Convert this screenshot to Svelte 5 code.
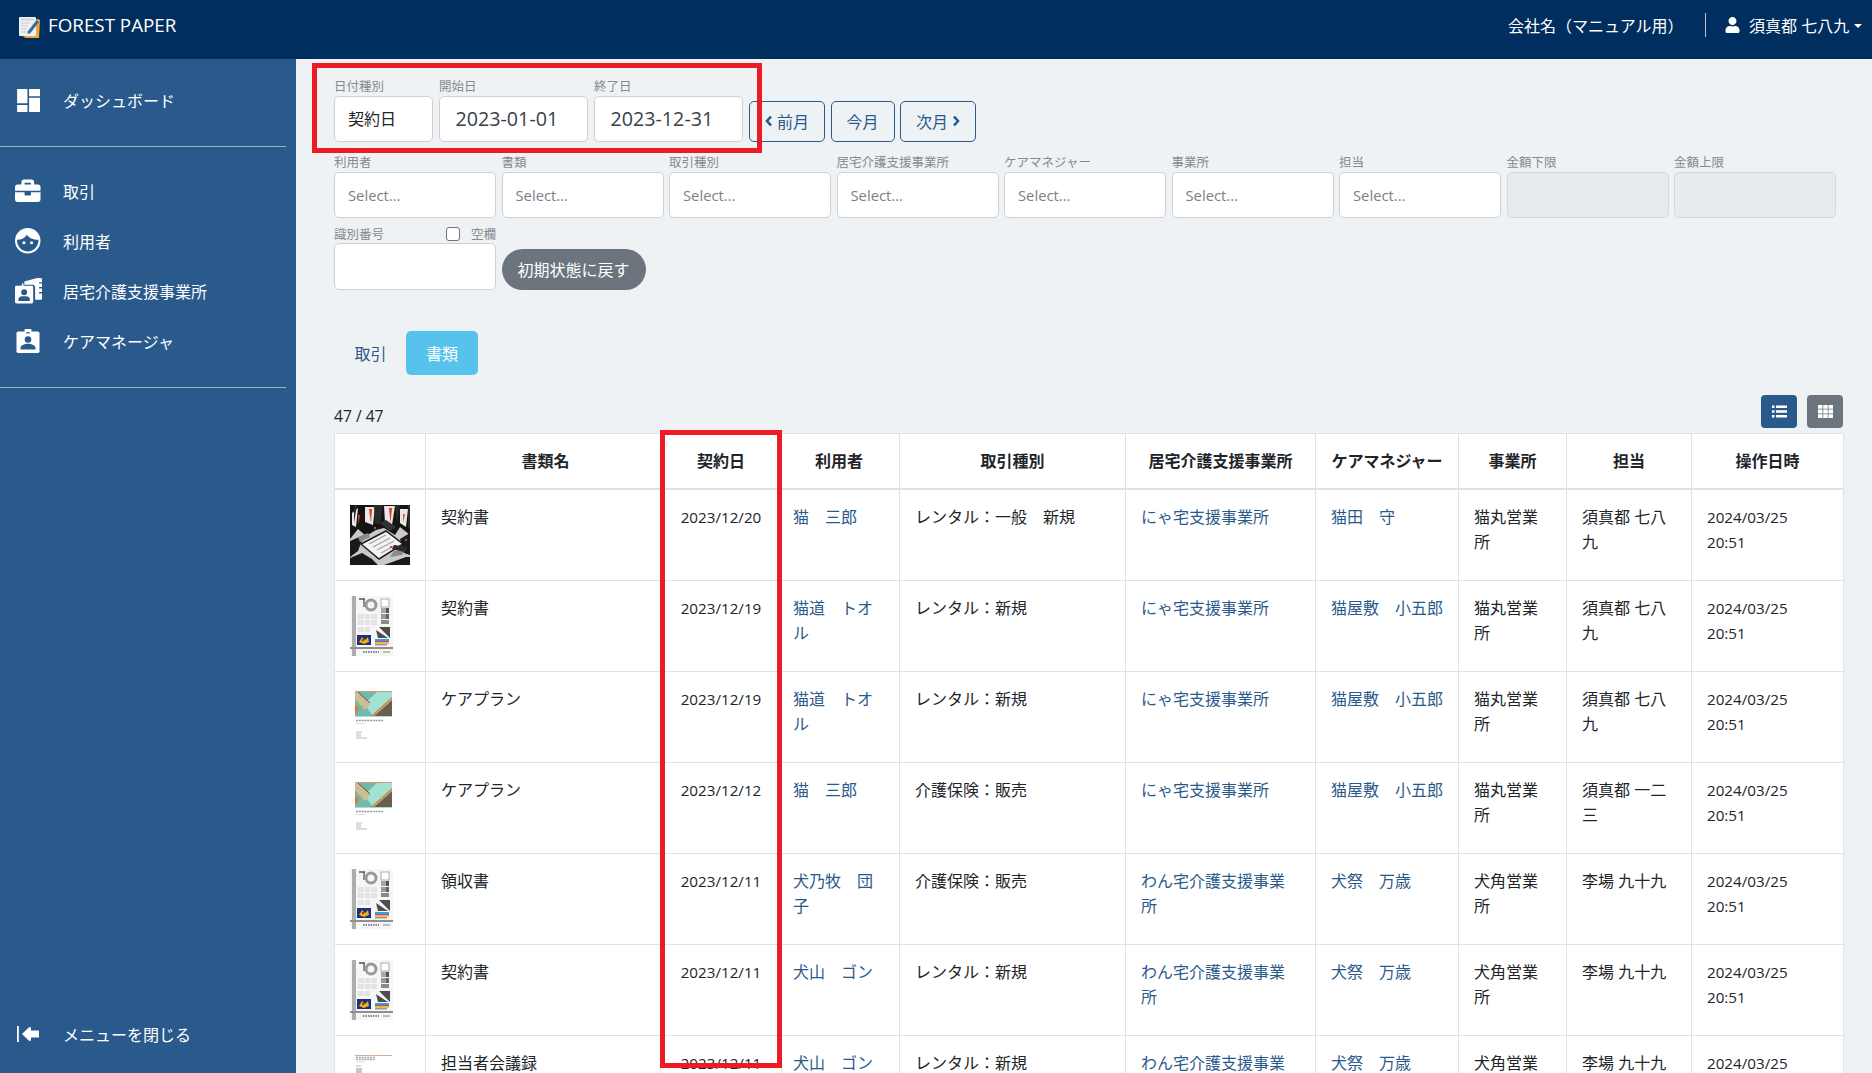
<script>
  const labelsA = ['利用者','書類','取引種別','居宅介護支援事業所','ケアマネジャー','事業所','担当'];
  const nya = 'にゃ宅支援事業所';
  const wan = 'わん宅介護支援事業所';
  const neko = '猫丸営業所';
  const inu = '犬角営業所';
  const rows = [
    { t:'dark', n:'契約書', d:'2023/12/20', u:'猫　三郎', k:'レンタル：一般　新規', o:nya, c:'猫田　守', b:neko, p:'須真都 七八九' },
    { t:'doc', n:'契約書', d:'2023/12/19', u:'猫道　トオル', k:'レンタル：新規', o:nya, c:'猫屋敷　小五郎', b:neko, p:'須真都 七八九' },
    { t:'plan', n:'ケアプラン', d:'2023/12/19', u:'猫道　トオル', k:'レンタル：新規', o:nya, c:'猫屋敷　小五郎', b:neko, p:'須真都 七八九' },
    { t:'plan', n:'ケアプラン', d:'2023/12/12', u:'猫　三郎', k:'介護保険：販売', o:nya, c:'猫屋敷　小五郎', b:neko, p:'須真都 一二三' },
    { t:'doc', n:'領収書', d:'2023/12/11', u:'犬乃牧　団子', k:'介護保険：販売', o:wan, c:'犬祭　万歳', b:inu, p:'李場 九十九' },
    { t:'doc', n:'契約書', d:'2023/12/11', u:'犬山　ゴン', k:'レンタル：新規', o:wan, c:'犬祭　万歳', b:inu, p:'李場 九十九' },
    { t:'minutes', n:'担当者会議録', d:'2023/12/11', u:'犬山　ゴン', k:'レンタル：新規', o:wan, c:'犬祭　万歳', b:inu, p:'李場 九十九' }
  ];
  const heads = ['', '書類名','契約日','利用者','取引種別','居宅介護支援事業所','ケアマネジャー','事業所','担当','操作日時'];
</script>

<div class="page">
  <header class="top">
    <div class="brand">
      <svg class="logo" viewBox="0 0 22 22">
        <path d="M6 20.5 L4 20 L4 6 L20 3 L22 4 L21 22 L7 22Z" fill="#f0a63a"/>
        <rect x="1" y="1" width="17" height="19" rx="1" fill="#eef1f2"/>
        <rect x="3" y="2.5" width="13" height="2" fill="#c9d3d9"/>
        <path d="M3 7h9M3 10h7M3 13h6M3 16h9" stroke="#c3ccd2" stroke-width="1.2"/>
        <path d="M10 15 L18.5 4 L21 6 L12.5 17 L9.6 18Z" fill="#3b6f94"/>
      </svg>
      <span>FOREST PAPER</span>
    </div>
    <div class="account">
      <span class="company">会社名（マニュアル用）</span>
      <span class="sep"></span>
      <svg class="user" viewBox="0 0 448 512"><path fill="#fff" d="M224 256c70.7 0 128-57.3 128-128S294.7 0 224 0 96 57.3 96 128s57.3 128 128 128zm89.6 32h-16.7c-22.2 10.2-46.9 16-72.9 16s-50.6-5.8-72.9-16h-16.7C60.2 288 0 348.2 0 422.4V464c0 26.5 21.5 48 48 48h352c26.5 0 48-21.5 48-48v-41.6c0-74.2-60.2-134.4-134.4-134.4z"/></svg>
      <span class="uname">須真都 七八九</span>
      <span class="caret"></span>
    </div>
  </header>

  <div class="body">
    <aside class="side">
      <nav class="group first">
        <a class="item">
          <svg class="ic" viewBox="0 0 22 22"><path fill="#fff" d="M1 1h9.500v13H1zM1 15.500h9.500V22H1zM12 1h10v6.500H12zM12 9h10v13H12z"/></svg>
          <span>ダッシュボード</span>
        </a>
      </nav>
      <nav class="group second">
        <a class="item">
          <svg class="ic brief" viewBox="0 0 512 512"><path fill="#fff" d="M320 336c0 8.84-7.16 16-16 16h-96c-8.84 0-16-7.16-16-16v-48H0v144c0 25.6 22.4 48 48 48h416c25.6 0 48-22.4 48-48V288H320v48zm144-208h-80V80c0-25.6-22.4-48-48-48H176c-25.6 0-48 22.4-48 48v48H48c-25.6 0-48 22.4-48 48v80h512v-80c0-25.6-22.4-48-48-48zm-144 0H192V96h128v32z"/></svg>
          <span>取引</span>
        </a>
        <a class="item">
          <svg class="ic brief" viewBox="0 0 25 25">
            <circle cx="12.500" cy="12.500" r="12.500" fill="#fff"/>
            <path fill="#2a5a8c" d="M2 11.500C6.500 11.500 9.800 9.600 11.500 6.500c2.200 3 6.300 5 11.500 5C23.300 17.800 18.500 23 12.500 23S1.700 17.800 2 11.500z"/>
            <circle cx="8.800" cy="14.500" r="1.500" fill="#fff"/><circle cx="16.200" cy="14.500" r="1.500" fill="#fff"/>
          </svg>
          <span>利用者</span>
        </a>
        <a class="item">
          <svg class="ic wide" viewBox="0 0 28 26">
            <path fill="#fff" d="M9.500 3.500 21.500 .3 C25 0 27 0 27.600 .8V20.500c0 1-.8 1.800-1.800 1.800H20.500V9.500c0-1.500-1.200-2.700-2.700-2.700H9.500z"/>
            <path d="M24.500 5h3M24.500 10h3M24.500 15h3" stroke="#2a5a8c" stroke-width="1.400"/>
            <rect x="0" y="8" width="18.500" height="18" rx="1.500" fill="#fff"/>
            <rect x="7" y="5.500" width="1.600" height="4" fill="#fff"/>
            <circle cx="9.300" cy="14.500" r="3" fill="#2a5a8c"/>
            <path fill="#2a5a8c" d="M3.500 23.500v-1.800c0-2 1.800-3.200 4-3.200h3.600c2.200 0 4 1.200 4 3.200v1.800z"/>
          </svg>
          <span>居宅介護支援事業所</span>
        </a>
        <a class="item">
          <svg class="ic" viewBox="0 0 23 24">
            <rect x="0" y="2.500" width="23" height="21.500" rx="1.800" fill="#fff"/>
            <rect x="8" y="0" width="7" height="5.500" rx="1" fill="#fff"/>
            <rect x="9.800" y="3.200" width="3.400" height="1.300" fill="#2a5a8c"/>
            <circle cx="11.500" cy="10.500" r="3.300" fill="#2a5a8c"/>
            <path fill="#2a5a8c" d="M4 20.500v-1.300c0-3 3.700-4.500 7.500-4.500s7.500 1.500 7.500 4.500v1.300z"/>
          </svg>
          <span>ケアマネージャ</span>
        </a>
      </nav>
      <a class="item close">
        <svg class="ic" viewBox="0 0 22 16"><rect x="0" y="0" width="1.800" height="16" fill="#fff"/><path fill="#fff" d="M5 8 12 1.200h2V4.500h8v7h-8v3.300h-2z"/></svg>
        <span>メニューを閉じる</span>
      </a>
    </aside>

    <main class="main">
      <section class="row-dates">
        <div class="field f-type"><label>日付種別</label><div class="box val">契約日</div></div>
        <div class="field f-date"><label>開始日</label><div class="box date">2023-01-01</div></div>
        <div class="field f-date"><label>終了日</label><div class="box date">2023-12-31</div></div>
        <button class="month b1">
          <svg viewBox="0 0 8 12"><path d="M6 1.500 2 6l4 4.500" fill="none" stroke="#2a5a8c" stroke-width="2.600"/></svg>前月
        </button>
        <button class="month b2">今月</button>
        <button class="month b3">次月
          <svg viewBox="0 0 8 12"><path d="M2 1.500 6 6l-4 4.500" fill="none" stroke="#2a5a8c" stroke-width="2.600"/></svg>
        </button>
      </section>

      <section class="grid9">
        {#each labelsA as l}
          <div class="field"><label>{l}</label><div class="box ph">Select...</div></div>
        {/each}
        <div class="field"><label>金額下限</label><div class="box off"></div></div>
        <div class="field"><label>金額上限</label><div class="box off"></div></div>
        <div class="field id">
          <div class="idlabel"><label>識別番号</label><span class="chk"><i></i><label>空欄</label></span></div>
          <div class="box"></div>
        </div>
        <div class="resetwrap"><button class="reset">初期状態に戻す</button></div>
      </section>

      <div class="tabs">
        <span class="tab">取引</span>
        <span class="tab on">書類</span>
      </div>

      <div class="tools">
        <span class="count">47 / 47</span>
        <div class="views">
          <span class="vbtn act">
            <svg viewBox="0 0 15 13"><path fill="#fff" d="M0 .5h2.500V3H0zM4 .5h11V3H4zM0 5.200h2.500v2.500H0zM4 5.200h11v2.500H4zM0 10h2.500v2.500H0zM4 10h11v2.500H4z"/></svg>
          </span>
          <span class="vbtn">
            <svg viewBox="0 0 15 13"><path fill="#fff" d="M0 0h4.500v3.800H0zM5.250 0h4.500v3.800h-4.500zM10.500 0H15v3.800h-4.500zM0 4.600h4.500v3.800H0zM5.250 4.600h4.500v3.800h-4.500zM10.500 4.600H15v3.800h-4.500zM0 9.200h4.500V13H0zM5.250 9.200h4.500V13h-4.500zM10.500 9.200H15V13h-4.500z"/></svg>
          </span>
        </div>
      </div>

      <table class="tbl">
        <thead>
          <tr>{#each heads as h}<th>{h}</th>{/each}</tr>
        </thead>
        <tbody>
          {#each rows as r}
            <tr>
              <td class="thumb">
                {#if r.t === 'dark'}
                  <svg class="tdark" viewBox="0 0 60 60">
                    <rect width="60" height="60" fill="#c9c9c9"/>
                    <path fill="#141414" d="M0 0h60v30L50 22 45 30 34 23 26 25 16 31 8 24 0 34z"/>
                    <path fill="#e8e8e8" d="M2 8 8 3 6 22 2 20zM15 2h10L23 20 15 17zM34 1h11L42 20 35 17zM50 4 58 4 56 22 50 18z"/>
                    <path fill="#2a2a2a" d="M4 0h3L4 18zM24 0h9L30 20 25 18zM45 0h5L47 18zM58 0h2V24l-2-2z"/>
                    <path fill="#e23a1a" d="M19 4h3l-1 14zM39 3h3l-1.500 15zM8 10h2L8.500 20zM53 9h1.800L53.500 18z"/>
                    <path fill="#191919" d="M0 36 14 30 8 46 0 52zM60 28 50 34 54 48 60 50zM0 60V53L12 48 22 54 28 60zM34 60 56 52 60 52V60z"/>
                    <path fill="#8a8a8a" d="M8 32 18 28 20 32 10 37zM44 46 56 44 52 50 40 52z"/>
                    <path fill="#333" d="M36 15 46 22 40 26 30 18z"/>
                    <path fill="#f3f3f3" stroke="#1e1e1e" stroke-width="1.500" d="M11 39 36 26 53 39 29 54z"/>
                    <path stroke="#a2a2a2" stroke-width="1.300" d="M19 39 36 30M23 42 40 33M27 45 44 36M31 48 46 40"/>
                    <path fill="#2b2b2b" d="M44 40 58 42 54 47 42 44z"/>
                    <path fill="#d9432a" d="M40 41h2v2h-2zM24 22h2v2h-2zM55 34h2v2h-2z"/>
                  </svg>
                {:else if r.t === 'doc'}
                  <svg class="tdoc" viewBox="0 0 43 60">
                    <rect width="43" height="60" fill="#f6f6f6"/>
                    <rect x="2" y="0" width="4" height="60" fill="#adadad"/>
                    <rect x="0" y="51" width="43" height="2" fill="#8f8f8f"/>
                    <path d="M9 3h6M14 3v8" stroke="#555" stroke-width="1.300" fill="none"/>
                    <circle cx="21" cy="9" r="5" fill="none" stroke="#999" stroke-width="3"/>
                    <rect x="31" y="3" width="8" height="8" fill="#fff" stroke="#999" stroke-width=".8"/>
                    <rect x="31" y="12" width="8" height="5" fill="#a8a8a8"/><rect x="36" y="12" width="3" height="5" fill="#555"/>
                    <rect x="31" y="18" width="8" height="5" fill="#999"/><rect x="36" y="18" width="3" height="5" fill="#666"/>
                    <rect x="31" y="24" width="8" height="4" fill="#8a8a8a"/>
                    <path fill="#e3e3e3" d="M8 18h6v5H8zM15 18h5v5h-5zM21 18h6v5h-6zM8 24h6v5H8zM15 24h5v5h-5zM21 24h6v5h-6zM8 31h6v5H8zM15 31h5v5h-5z"/>
                    <path fill="#4c4c4c" d="M29 31 40 31V42zM26 34 32 38 38 42H28z"/>
                    <rect x="7" y="39" width="14" height="10" fill="#17307a"/>
                    <path fill="#e9b21c" d="M9 46 12 41 15 44 18 41 19 46 14 48z"/><circle cx="13" cy="44" r="1.200" fill="#c3261f"/>
                    <rect x="25" y="43" width="14" height="2" fill="#2aa6d8"/><rect x="25" y="45" width="14" height="1.500" fill="#d23a9a"/><rect x="25" y="46.500" width="14" height="1.500" fill="#e8c91e"/><rect x="25" y="48" width="12" height="1.500" fill="#999"/>
                    <path stroke="#888" stroke-width="2" stroke-dasharray="1.500 1" d="M13 56H29"/>
                    <path stroke="#aaa" stroke-width="1.500" d="M33 56h7"/>
                  </svg>
                {:else if r.t === 'plan'}
                  <svg class="tplan" viewBox="0 -4 37 60">
                    <rect width="37" height="1" fill="#b5a78e"/>
                    <rect x="13" width="11" height="1" fill="#ef8a63"/>
                    <rect y="1" width="37" height="25" fill="#a0e3d2"/>
                    <path fill="#72b9ac" d="M0 1h22L9 13 18 25H0z"/>
                    <path fill="#cfbd8e" d="M0 1h4l11 12-5 6L0 8z"/>
                    <path fill="#f07030" d="M0 13l4 5-4 5z"/>
                    <path fill="#6b5f4a" d="M37 9V25H19z"/>
                    <path d="M3 1 15 12" stroke="#5c5240" stroke-width="1"/>
                    <path d="M37 7 17 25" stroke="#ee6e2a" stroke-width="1.400"/>
                    <path d="M1 29.500H28" stroke="#9a9a9a" stroke-width="1.600" stroke-dasharray="2 .8"/>
                    <path d="M1 32.500H10" stroke="#ddd" stroke-width="1"/>
                    <path d="M1 41H7" stroke="#8fd3c8" stroke-width="1"/>
                    <path d="M1 43H6M1 45H6M1 47H12" stroke="#bbb" stroke-width="1"/>
                  </svg>
                {:else}
                  <svg class="tplan" viewBox="0 -4 37 60">
                    <rect width="37" height="1" fill="#b5b5b5"/>
                    <rect x="13" width="11" height="1" fill="#f5a58a"/>
                    <path d="M1 2.500H20M1 4.500H20" stroke="#aaa" stroke-width="1.500" stroke-dasharray="2 .8"/>
                    <path d="M1 7H10" stroke="#ddd" stroke-width="1"/>
                    <path d="M1 11H6" stroke="#f5a58a" stroke-width="1"/>
                    <rect x="1" y="13" width="6" height="6" fill="#c8c8c8"/>
                  </svg>
                {/if}
              </td>
              <td>{r.n}</td>
              <td class="num ctr">{r.d}</td>
              <td class="user-cell"><a class="lnk">{r.u}</a></td>
              <td>{r.k}</td>
              <td><a class="lnk">{r.o}</a></td>
              <td><a class="lnk">{r.c}</a></td>
              <td>{r.b}</td>
              <td>{r.p}</td>
              <td class="num">2024/03/25<br />20:51</td>
            </tr>
          {/each}
        </tbody>
      </table>
    </main>
  </div>

  <div class="mark m1"></div>
  <div class="mark m2"></div>
</div>

<style>
  :global(body) { margin: 0; background: #eff2f5; overflow: hidden; }
  .page {
    position: relative; width: 1872px; height: 1073px; overflow: hidden;
    font-family: "Open Sans", "Noto Sans CJK JP", sans-serif; font-size: 16px; color: #212529;
    background: #eff2f5;
  }
  .top {
    height: 59px; background: #002e5e; color: #fff; display: flex;
    align-items: center; justify-content: space-between; padding: 0 10px 9px 18px; box-sizing: border-box;
  }
  .brand { display: flex; align-items: center; gap: 8px; font-size: 18.800px; }
  .brand span { margin-top: -1px; }
  .logo { width: 22px; height: 22px; margin-top: 4px; }
  .account { display: flex; align-items: center; }
  .company { width: 176px; }
  .sep { width: 1px; height: 24px; background: #b9c4d0; margin: 0 19px 0 21px; }
  .user { width: 15px; height: 16px; margin-right: 9px; }
  .uname { width: 105px; white-space: nowrap; }
  .caret { width: 0; height: 0; border: 4px solid transparent; border-top-color: #fff; border-bottom: 0; margin-top: 1px; }

  .body { display: flex; height: 1014px; }
  .side {
    width: 296px; flex: none; background: #2a5a8c; color: #fff; display: flex; flex-direction: column;
    box-sizing: border-box; height: 1014px;
  }
  .group { width: 286px; border-bottom: 1px solid #9db1c7; box-sizing: border-box; }
  .group.first { height: 88px; padding-top: 16px; }
  .group.second { height: 241px; padding-top: 19px; }
  .item { display: flex; align-items: center; height: 50px; padding-left: 16px; }
  .item span { white-space: nowrap; }
  .ic { width: 24px; height: 24px; margin-right: 23px; flex: none; }
  .ic.brief { width: 25.500px; height: 25.500px; margin-left: -1px; margin-right: 22.500px; }
  .ic.wide { width: 27.500px; height: 25.500px; margin-left: -1.500px; margin-right: 21px; }
  .close { margin-top: auto; margin-bottom: 14px; }
  .close .ic { width: 22px; height: 16px; margin-left: 1px; margin-right: 24px; }

  .main { flex: 1; min-width: 0; padding: 18.700px 29px 0 38px; box-sizing: border-box; }
  label { display: block; font-size: 12.500px; line-height: 17px; color: #85898d; white-space: nowrap; }
  .box {
    height: 46px; box-sizing: border-box; background: #fff; border: 1px solid #ced0d4; border-radius: 5px;
    display: flex; align-items: center;
  }
  .row-dates { display: flex; align-items: flex-end; height: 64px; }
  .row-dates label { margin-bottom: 1px; }
  .f-type { width: 99px; margin-right: 6px; }
  .f-date { width: 149px; margin-right: 6px; }
  .val { padding: 0 0 2px 13px; }
  .date { padding-left: 15.500px; font-size: 19.700px; color: #3b4046; }
  .month {
    height: 41px; box-sizing: border-box; background: transparent; border: 1px solid #2a5a8c; border-radius: 5px;
    color: #2a5a8c; font: inherit; padding: 0; margin: 0 5.500px 0 0; display: flex; align-items: center; justify-content: center; gap: 4px;
  }
  .month svg { width: 8px; height: 12px; }
  .b1 { width: 76px; }
  .b2 { width: 64px; }
  .b3 { width: 76px; }

  .grid9 { display: grid; grid-template-columns: repeat(9, 162px); column-gap: 5.500px; margin-top: 12px; row-gap: 7px; }
  .grid9 .field > label { line-height: 18.500px; }
  .ph { padding-left: 13px; font-size: 14.800px; color: #7b8086; }
  .off { background: #e8ebee; border-color: #d6d9dc; }
  .idlabel { display: flex; justify-content: space-between; align-items: center; height: 17.800px; }
  .chk { display: flex; align-items: center; gap: 11px; }
  .chk i { width: 12px; height: 12px; background: #fff; border: 1px solid #6f757b; border-radius: 3px; display: block; }
  .id .box { height: 47px; }
  .id { grid-column: 1; }
  .resetwrap { display: flex; align-items: flex-end; grid-column: 2 / span 2; }
  .reset {
    width: 144px; height: 41px; border: 0; border-radius: 21px; background: #6c757d; color: #fff; font: inherit; padding: 0;
  }

  .tabs { display: flex; margin: 41px 0 0 1px; height: 44px; }
  .tab { width: 71px; display: flex; align-items: center; justify-content: center; color: #2a5a8c; }
  .tab.on { width: 72px; background: #57c3ec; color: #fff; border-radius: 5px; }

  .tools { display: flex; align-items: flex-end; justify-content: space-between; margin-top: 20px; height: 33px; padding-bottom: 5.500px; }
  .count { font-size: 15.600px; line-height: 20px; margin-bottom: 2px; }
  .views { display: flex; gap: 10px; }
  .vbtn { width: 36px; height: 33px; border-radius: 4px; background: #6c757d; display: flex; align-items: center; justify-content: center; }
  .vbtn.act { background: #2a5a8c; }
  .vbtn svg { width: 15px; height: 13px; }

  .tbl { width: 1509px; table-layout: fixed; border-collapse: collapse; background: #fff; }
  .tbl th, .tbl td { border: 1px solid #dfe2e7; vertical-align: top; }
  .tbl th { height: 55.500px; box-sizing: border-box; padding: 0 0 3px; vertical-align: middle; text-align: center; font-weight: 700; border-bottom: 2px solid #dfe2e7; white-space: nowrap; }
  .tbl td { padding: 15px; line-height: 24.300px; height: 60px; word-break: break-all; }
  .tbl th:nth-child(1) { width: 91px; }
  .tbl th:nth-child(2) { width: 235px; padding-left: 5px; }
  .tbl th:nth-child(3) { width: 121px; }
  .tbl th:nth-child(4) { width: 118px; padding-right: 3px; }
  .tbl th:nth-child(5) { width: 226px; }
  .tbl th:nth-child(6) { width: 190px; }
  .tbl th:nth-child(7) { width: 143px; }
  .tbl th:nth-child(8) { width: 108px; }
  .tbl th:nth-child(9) { width: 125px; }
  .tbl th:nth-child(10) { width: 152px; }
  .tbl td.thumb { padding: 15px 0 0 15px; line-height: 0; }
  .thumb svg { display: block; }
  .tdark { width: 60px; height: 60px; }
  .tdoc { width: 43px; height: 60px; }
  .tplan { width: 37px; height: 60px; margin-left: 5px; }
  .num { font-size: 15.200px; white-space: nowrap; }
  .tbl td.ctr { text-align: center; }
  .tbl td.user-cell { padding-left: 11px; }
  .lnk { color: #2a5a8c; }

  .mark { position: absolute; border: 5px solid #ed1c24; box-sizing: border-box; pointer-events: none; }
  .m1 { left: 312px; top: 63px; width: 450px; height: 90px; }
  .m2 { left: 660px; top: 430px; width: 122px; height: 638px; }
</style>
